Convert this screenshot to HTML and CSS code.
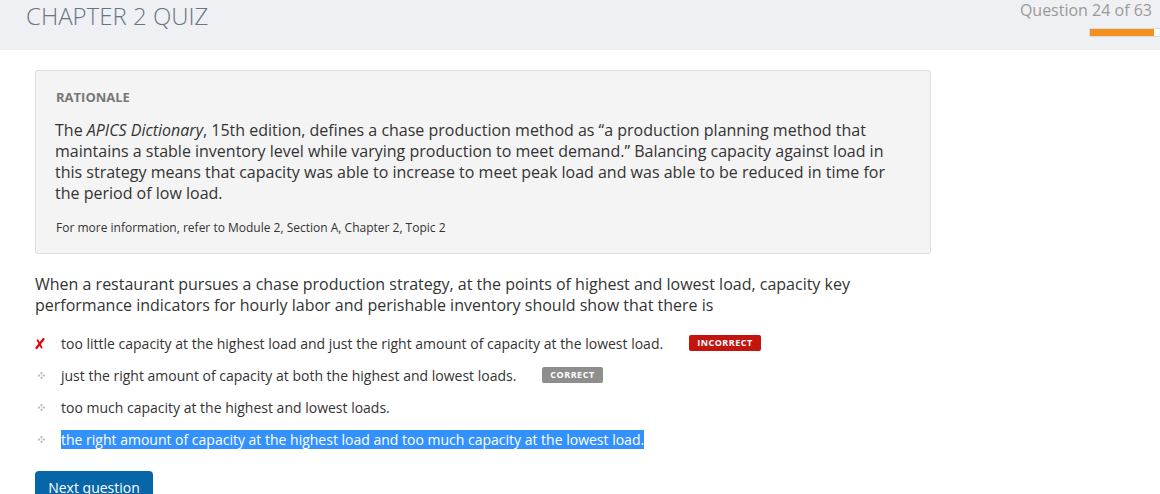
FILE: index.html
```html
<!DOCTYPE html>
<html lang="en">
<head>
<meta charset="utf-8">
<title>Chapter 2 Quiz</title>
<link rel="stylesheet" href="styles.css">
</head>
<body>
<header class="topbar">
  <h1 class="quiz-title">CHAPTER 2 QUIZ</h1>
  <div class="progress-wrap">
    <div class="counter">Question 24 of 63</div>
    <div class="progress"><div class="progress-fill" style="width:64px"></div></div>
  </div>
</header>
<main class="content">
  <section class="rationale">
    <h2 class="rationale-label">RATIONALE</h2>
    <p class="rationale-text">The <em>APICS Dictionary</em>, 15th edition, defines a chase production method as “a production planning method that maintains a stable inventory level while varying production to meet demand.” Balancing capacity against load in this strategy means that capacity was able to increase to meet peak load and was able to be reduced in time for the period of low load.</p>
    <p class="rationale-ref">For more information, refer to Module 2, Section A, Chapter 2, Topic 2</p>
  </section>
  <p class="question">When a restaurant pursues a chase production strategy, at the points of highest and lowest load, capacity key performance indicators for hourly labor and perishable inventory should show that there is</p>
  <ul class="options">
    <li class="option">
      <span class="marker"><svg class="x-icon" width="10" height="11" viewBox="0 0 10 11"><path d="M1.5 10 L8.5 1" stroke="#e5000a" stroke-width="2.2" stroke-linecap="round" fill="none"/><path d="M2.6 2.2 L6.6 9.6" stroke="#e5000a" stroke-width="1.8" stroke-linecap="round" fill="none"/></svg></span>
      <span class="option-text">too little capacity at the highest load and just the right amount of capacity at the lowest load.</span>
      <span class="badge badge-incorrect">INCORRECT</span>
    </li>
    <li class="option">
      <span class="marker"><svg class="dot-icon" width="7" height="7" viewBox="0 0 7 7"><rect x="2.5" y="0" width="2" height="2" fill="#bdbdbd"/><rect x="0" y="2.5" width="2" height="2" fill="#bdbdbd"/><rect x="5" y="2.5" width="2" height="2" fill="#bdbdbd"/><rect x="2.5" y="5" width="2" height="2" fill="#bdbdbd"/><rect x="2.5" y="2.5" width="2" height="2" fill="#e4e4e4"/></svg></span>
      <span class="option-text">just the right amount of capacity at both the highest and lowest loads.</span>
      <span class="badge badge-correct">CORRECT</span>
    </li>
    <li class="option">
      <span class="marker"><svg class="dot-icon" width="7" height="7" viewBox="0 0 7 7"><rect x="2.5" y="0" width="2" height="2" fill="#bdbdbd"/><rect x="0" y="2.5" width="2" height="2" fill="#bdbdbd"/><rect x="5" y="2.5" width="2" height="2" fill="#bdbdbd"/><rect x="2.5" y="5" width="2" height="2" fill="#bdbdbd"/><rect x="2.5" y="2.5" width="2" height="2" fill="#e4e4e4"/></svg></span>
      <span class="option-text">too much capacity at the highest and lowest loads.</span>
    </li>
    <li class="option">
      <span class="marker"><svg class="dot-icon" width="7" height="7" viewBox="0 0 7 7"><rect x="2.5" y="0" width="2" height="2" fill="#bdbdbd"/><rect x="0" y="2.5" width="2" height="2" fill="#bdbdbd"/><rect x="5" y="2.5" width="2" height="2" fill="#bdbdbd"/><rect x="2.5" y="5" width="2" height="2" fill="#bdbdbd"/><rect x="2.5" y="2.5" width="2" height="2" fill="#e4e4e4"/></svg></span>
      <span class="option-text option-selected">the right amount of capacity at the highest load and too much capacity at the lowest load.</span>
    </li>
  </ul>
  <button class="next-btn" type="button">Next question</button>
</main>
</body>
</html>
```
FILE: styles.css
```css
* { box-sizing: border-box; }
html, body { margin: 0; padding: 0; }
body {
  font-family: "Open Sans", "Liberation Sans", sans-serif;
  color: #333;
  background: #fff;
  overflow: hidden;
}
.topbar {
  height: 50px;
  background: #eff0f4;
  display: flex;
  justify-content: space-between;
  align-items: flex-start;
}
.quiz-title {
  margin: -1px 0 0 26px;
  font-size: 24px;
  font-weight: 300;
  color: #6a7480;
  line-height: 34px;
  letter-spacing: 0;
}
.progress-wrap {
  display: flex;
  flex-direction: column;
  align-items: flex-end;
}
.counter {
  margin: -1px 8px 0 0;
  font-size: 16px;
  color: #9a9a9a;
  line-height: 23px;
}
.progress {
  margin-top: 6px;
  width: 71px;
  height: 9px;
  background: #fff;
  border: 1px solid #dcdcdc;
  border-right: none;
}
.progress-fill {
  height: 100%;
  background: #f39020;
}
.content {
  padding: 20px 0 0 35px;
  width: 931px;
}
.rationale {
  background: #f4f4f4;
  border: 1px solid #dedede;
  border-radius: 3px;
  padding: 17px 20px 16px 20px;
  height: 184px;
}
.rationale-label {
  margin: 0;
  font-size: 13px;
  font-weight: 700;
  color: #777;
  line-height: 18px;
}
.rationale-text {
  margin: 14px 0 0 -1px;
  font-size: 16px;
  line-height: 21px;
  color: #333;
}
.rationale-ref {
  margin: 15px 0 0 0;
  font-size: 12px;
  line-height: 17px;
  color: #333;
}
.question {
  margin: 20px 0 0 0;
  font-size: 16px;
  line-height: 21px;
  color: #333;
}
.options {
  list-style: none;
  margin: 11px 0 0 0;
  padding: 0;
}
.option {
  display: flex;
  align-items: center;
  height: 32px;
  font-size: 14px;
}
.marker {
  width: 26px;
  flex: none;
  display: flex;
  align-items: center;
}
.x-icon { margin-top: 1px; }
.dot-icon { margin-left: 3px; margin-top: 1px; }
.option-text {
  line-height: 19px;
  color: #333;
}
.option-selected {
  background: #3391fd;
  color: #fff;
}
.badge {
  margin-left: 26px;
  height: 16px;
  padding: 0 8px;
  border-radius: 2px;
  color: #fff;
  font-size: 9px;
  font-weight: 700;
  letter-spacing: 0.5px;
  line-height: 16px;
}
.badge-incorrect { background: #c4140e; }
.badge-correct { background: #8e8e8e; }
.next-btn {
  display: block;
  margin-top: 16px;
  width: 118px;
  padding: 7px 0 9px;
  background: #0766a8;
  border: none;
  border-radius: 4px;
  color: #fff;
  font-family: "Open Sans", "Liberation Sans", sans-serif;
  font-size: 14px;
  line-height: 20px;
}
```
